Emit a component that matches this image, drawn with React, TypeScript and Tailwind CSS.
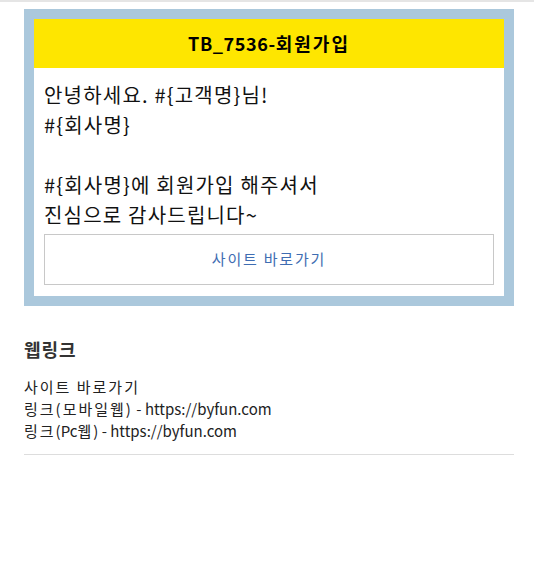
function K({ children }: { children: React.ReactNode }) {
  return <span className="tracking-[2px]">{children}</span>;
}

export default function App() {
  return (
    <div
      className="w-[534px] min-h-[585px] bg-white border-t-2 border-[#e5e5e5]"
      style={{ fontFamily: '"Noto Sans CJK KR", "Noto Sans", sans-serif' }}
    >
      <div className="pl-6 pt-[7px] w-[514px]">
        <div className="border-[10px] border-[#abc8dc] bg-white">
          <div className="h-[49px] bg-[#fee600] flex items-center justify-center">
            <span className="text-[18px] font-bold text-black tracking-[0.6px]">
              TB_7536-<span className="tracking-[2px]">회원가입</span>
            </span>
          </div>
          <div className="px-[10px] pt-3 pb-[11px]">
            <div className="text-[20px] leading-[30px] text-[#111] tracking-[1.2px]">
              <div>안녕하세요. #&#123;고객명&#125;님!</div>
              <div>#&#123;회사명&#125;</div>
              <div className="h-[30px]"></div>
              <div>#&#123;회사명&#125;에 회원가입 해주셔서</div>
              <div>진심으로 감사드립니다~</div>
            </div>
            <div className="mt-1 h-[51px] border border-[#c8c8c8] flex items-center justify-center">
              <span className="text-[15px] text-[#3f6db2] tracking-[1.8px]">사이트 바로가기</span>
            </div>
          </div>
        </div>
        <div className="pt-[30px]">
          <div className="text-[18px] font-bold leading-[26px] text-[#333] tracking-[1px]">웹링크</div>
          <div className="mt-[14px] text-[15px] leading-[22px] text-[#222]">
            <div><K>사이트 바로가기</K></div>
            <div><K>링크(모바일웹)</K> - https://byfun.com</div>
            <div><K>링크</K>(Pc<K>웹</K>) - https://byfun.com</div>
          </div>
          <div className="mt-[12px] border-t border-[#dddddd]"></div>
        </div>
      </div>
    </div>
  );
}
